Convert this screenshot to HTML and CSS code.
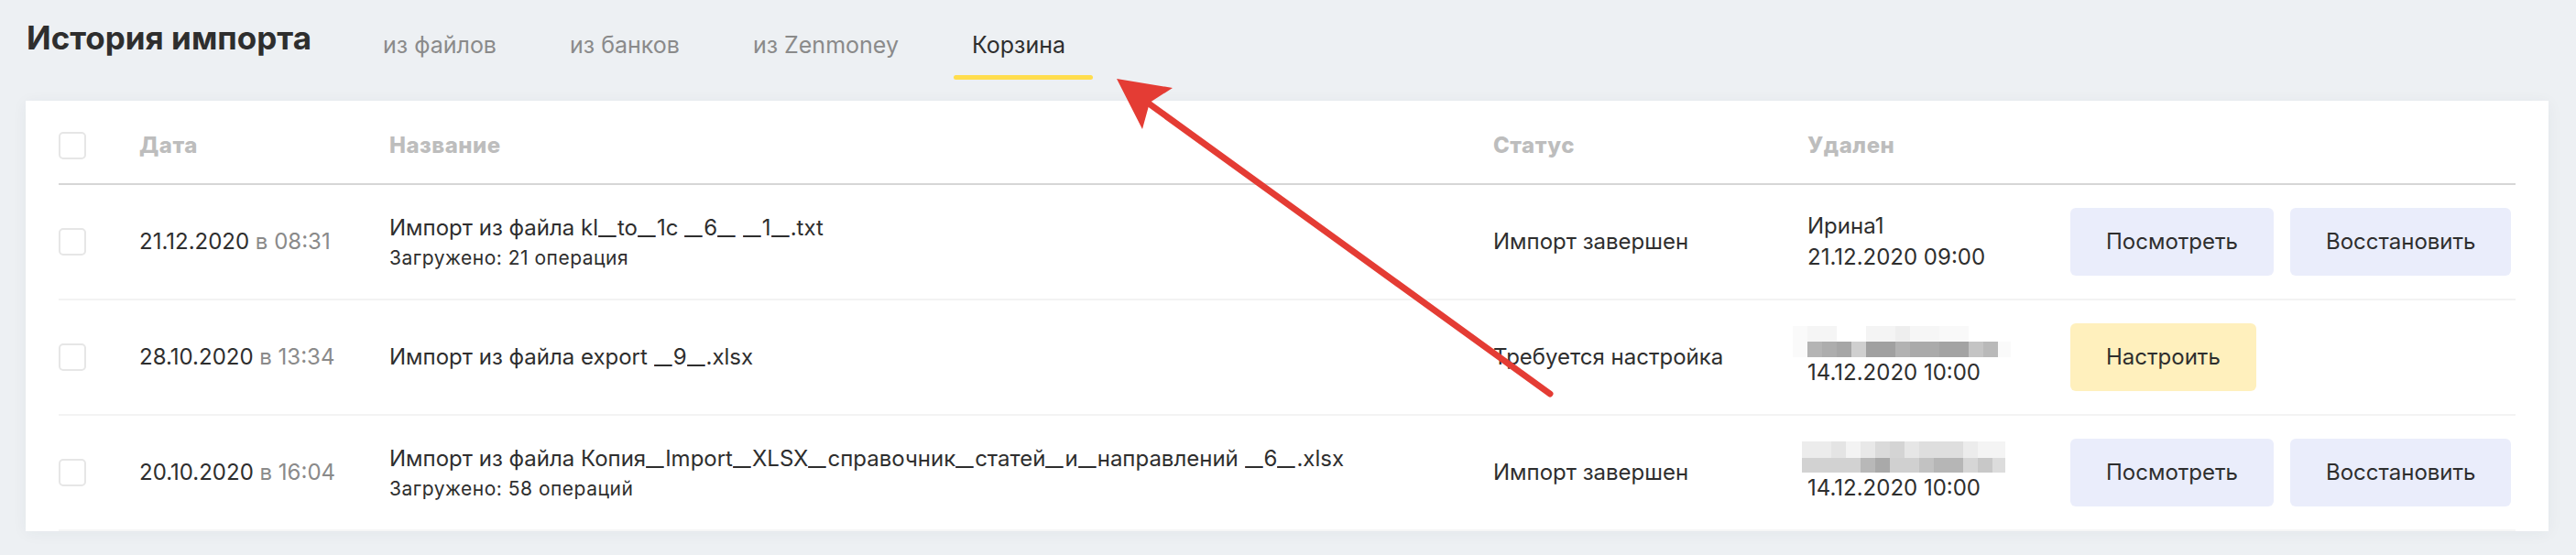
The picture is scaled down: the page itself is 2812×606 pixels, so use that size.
FILE: index.html
```html
<!DOCTYPE html>
<html lang="ru">
<head>
    <meta charset="UTF-8">
    <meta name="viewport" content="width=device-width, initial-scale=1.0">
    <title>История импорта</title>
    <link rel="stylesheet" href="styles.css">
</head>
<body>
<div class="page">
    <header class="top">
        <h1 class="title">История импорта</h1>
        <nav class="tabs">
            <a class="tab">из файлов</a>
            <a class="tab">из банков</a>
            <a class="tab">из Zenmoney</a>
            <a class="tab tab-active">Корзина</a>
        </nav>
    </header>

    <section class="card">
        <div class="row row-head">
            <span class="check"></span>
            <span>Дата</span>
            <span>Название</span>
            <span>Статус</span>
            <span>Удален</span>
            <span></span>
        </div>

        <div class="row">
            <span class="check"></span>
            <div>21.12.2020 <span class="time">в 08:31</span></div>
            <div class="name">Импорт из файла kl<i class="u">_</i>to<i class="u">_</i>1c <i class="u">_</i>6<i class="u">_</i> <i class="u">_</i>1<i class="u">_</i>.txt<div class="sub">Загружено: 21 операция</div></div>
            <div>Импорт завершен</div>
            <div class="deleted">Ирина1<br>21.12.2020 09:00</div>
            <div class="actions">
                <button class="btn">Посмотреть</button>
                <button class="btn">Восстановить</button>
            </div>
        </div>

        <div class="row">
            <span class="check"></span>
            <div>28.10.2020 <span class="time">в 13:34</span></div>
            <div class="name">Импорт из файла export <i class="u">_</i>9<i class="u">_</i>.xlsx</div>
            <div>Требуется настройка</div>
            <div class="deleted"><div class="masked"></div>14.12.2020 10:00</div>
            <div class="actions">
                <button class="btn btn-warn">Настроить</button>
            </div>
        </div>

        <div class="row">
            <span class="check"></span>
            <div>20.10.2020 <span class="time">в 16:04</span></div>
            <div class="name">Импорт из файла Копия<i class="u">_</i>Import<i class="u">_</i>XLSX<i class="u">_</i>справочник<i class="u">_</i>статей<i class="u">_</i>и<i class="u">_</i>направлений <i class="u">_</i>6<i class="u">_</i>.xlsx<div class="sub">Загружено: 58 операций</div></div>
            <div>Импорт завершен</div>
            <div class="deleted"><div class="masked masked-alt"></div>14.12.2020 10:00</div>
            <div class="actions">
                <button class="btn">Посмотреть</button>
                <button class="btn">Восстановить</button>
            </div>
        </div>
    </section>

    <!-- стрелка-пометка поверх скриншота -->
    <svg class="arrow" viewBox="0 0 2812 606">
        <line x1="1692" y1="430" x2="1254" y2="113" stroke="#e43c34" stroke-width="7" stroke-linecap="round"/>
        <polygon points="1219,86 1280,96 1255,112 1247,141" fill="#e43c34"/>
    </svg>
</div>
</body>
</html>
```

FILE: styles.css
```css
body { margin: 0; background: #edf0f3; font-family: Inter, "Noto Sans", sans-serif; color: #2e2e2e; }
.page { position: relative; padding: 0 30px 27px 28px; }

.top { display: flex; align-items: flex-start; padding-left: 1px; }
.title { margin: 0; padding-top: 21px; font-size: 35px; line-height: 41px; font-weight: 700; color: #2e2e2e; }
.tabs { display: flex; gap: 40px; margin-left: 58px; }
.tab { padding: 34px 20px 0; font-size: 25px; line-height: 31px; color: #8a8a8a; cursor: pointer; }
.tab::after { content: ""; display: block; height: 5px; margin: 17px -20px 0; border-radius: 3px; }
.tab-active { color: #2e2e2e; }
.tab-active::after { background: #ffdd4d; margin-right: -30px; }

.card { margin-top: 23px; padding: 0 36px; background: #fff; box-shadow: 0 2px 16px rgba(40, 60, 80, 0.05); }
.row { display: grid; grid-template-columns: 88px 273px 1205px 343px 287px 1fr; align-items: center; padding: 25px 0; border-bottom: 2px solid #f3f3f3; font-size: 24px; line-height: 30px; }
.row:last-child { border-bottom-color: #f6f6f6; }
.row-head { padding: 34px 0 26px; border-bottom-color: #d6d6d6; font-size: 24px; font-weight: 800; letter-spacing: 0.5px; color: #bdbdbd; }

.check { width: 30px; height: 30px; box-sizing: border-box; border: 2px solid #e6e6e6; border-radius: 5px; }
.time { color: #8a8a8a; }
.u { display: inline-block; width: 21px; font-style: normal; transform: scaleX(1.8); transform-origin: 0 0; }
.sub { margin-top: 6px; font-size: 21px; line-height: 24px; letter-spacing: 0.5px; }
.deleted { line-height: 34px; }

.masked { width: 238px; height: 34px; margin-left: -16px;
    background:
        linear-gradient(90deg, #fafafa 0 16px, #b4b4b4 16px 32px, #adadad 32px 48px, #a6a6a6 48px 64px, #cfcfcf 64px 80px, #a0a0a0 80px 112px, #b2b2b2 112px 128px, #aaaaaa 128px 160px, #a3a3a3 160px 192px, #c4c4c4 192px 208px, #b9b9b9 208px 224px, #fafafa 224px) bottom / 100% 17px no-repeat,
        linear-gradient(90deg, #fafafa 0 16px, #f5f5f5 16px 48px, #fff 48px 80px, #f4f4f4 80px 112px, #eeeeee 112px 128px, #f6f6f6 128px 160px, #f9f9f9 160px 192px, #fff 192px) top / 100% 17px no-repeat; }
.masked-alt { width: 222px; margin-left: -6px;
    background:
        linear-gradient(90deg, #d2d2d2 0 64px, #b8b8b8 64px 80px, #a9a9a9 80px 96px, #d0d0d0 96px 128px, #c2c2c2 128px 144px, #b6b6b6 144px 176px, #d6d6d6 176px 192px, #c8c8c8 192px 208px, #dcdcdc 208px) bottom / 100% 16px no-repeat,
        linear-gradient(90deg, #ececec 0 32px, #e4e4e4 32px 48px, #f3f3f3 48px 64px, #e8e8e8 64px 80px, #dadada 80px 96px, #d4d4d4 96px 112px, #e6e6e6 112px 128px, #dedede 128px 176px, #ececec 176px 192px, #f4f4f4 192px) top / 100% 18px no-repeat; }

.actions { display: flex; gap: 18px; }
.btn { height: 74px; padding: 0 39px; border: 0; border-radius: 6px; background: #eaedfb; font: inherit; color: #2e2e2e; cursor: pointer; }
.btn-warn { background: #fff0bd; }

.arrow { position: absolute; left: 0; top: 0; width: 2812px; height: 606px; pointer-events: none; }
```
